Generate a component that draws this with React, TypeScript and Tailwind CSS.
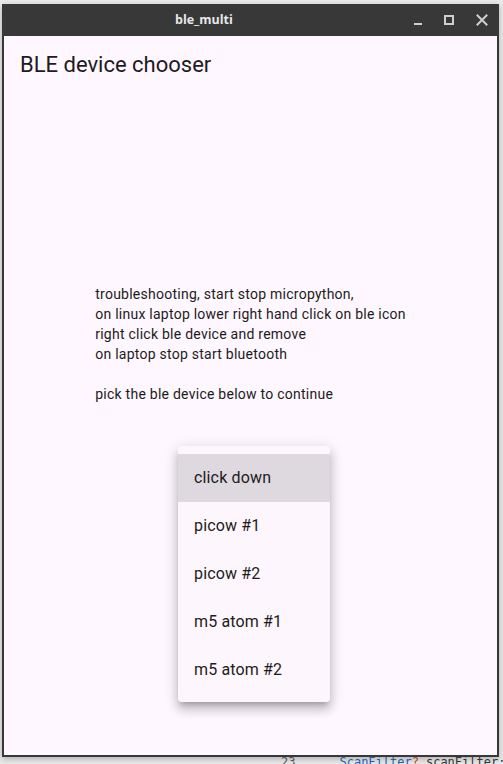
const notes = [
  "troubleshooting, start stop micropython,",
  "on linux laptop lower right hand click on ble icon",
  "right click ble device and remove",
  "on laptop stop start bluetooth",
]

const devices = ["click down", "picow #1", "picow #2", "m5 atom #1", "m5 atom #2"]

function TitleBar() {
  return (
    <div className="h-[32px] bg-[#383838] flex items-center text-[#d6d6d6]">
      <span
        className="ml-[173px] text-[12.5px] font-bold text-[#e8e8e8]"
        style={{ fontFamily: '"Open Sans", "DejaVu Sans", sans-serif' }}
      >
        ble_multi
      </span>
      <div className="ml-auto flex items-center mr-[11px]">
        <svg width="10" height="10" viewBox="0 0 10 10" className="mr-[21px] mt-[2px]">
          <rect x="1" y="7" width="8" height="2" fill="#cfcfcf" />
        </svg>
        <svg width="10" height="10" viewBox="0 0 10 10" className="mr-[22px]">
          <rect x="1" y="1" width="8" height="8" fill="none" stroke="#cfcfcf" strokeWidth="2" />
        </svg>
        <svg width="12" height="12" viewBox="0 0 12 12">
          <path d="M1.5 1.5 L10.5 10.5 M10.5 1.5 L1.5 10.5" stroke="#cfcfcf" strokeWidth="2" strokeLinecap="square" />
        </svg>
      </div>
    </div>
  )
}

function DeviceMenu() {
  return (
    <div className="ml-[174px] mt-[42px] w-[152px] py-2 bg-[#fdf7fd] rounded-[4px] shadow-[0_5px_5px_-3px_rgba(0,0,0,0.2),0_8px_10px_1px_rgba(0,0,0,0.14),0_3px_14px_2px_rgba(0,0,0,0.12)]">
      {devices.map((d, i) => (
        <div
          key={d}
          className={`h-12 flex items-center px-4 text-[16px] tracking-[0.15px] text-[#1d1b20] ${i === 0 ? "bg-[#ddd9de]" : ""}`}
        >
          {d}
        </div>
      ))}
    </div>
  )
}

export default function App() {
  return (
    <div
      className="w-[503px] h-[764px] bg-[#e9e9e9] overflow-hidden flex flex-col"
      style={{ fontFamily: 'Roboto, "Noto Sans", sans-serif' }}
    >
      <div className="h-[4px] shrink-0" />
      <div className="ml-[2px] w-[497px] h-[753px] shrink-0 flex flex-col bg-[#383838] border-x-2 border-b-2 border-[#383838] shadow-[0_2px_6px_rgba(0,0,0,0.25)]">
        <div className="-mx-[2px]">
          <TitleBar />
        </div>
        <div className="flex-1 bg-[#fef7ff] flex flex-col">
          <div className="h-14 flex items-center px-4 text-[22px] text-[#1d1b20]">BLE device chooser</div>
          <div className="mt-[192px] mx-auto w-fit text-[14px] leading-[20px] tracking-[0.25px] text-[#1d1b20]">
            {notes.map((n) => (
              <div key={n}>{n}</div>
            ))}
            <div className="h-5" />
            <div>pick the ble device below to continue</div>
          </div>
          <DeviceMenu />
        </div>
      </div>
      <div className="h-[7px] overflow-hidden flex items-start text-[12px] leading-[12px]" style={{ fontFamily: '"DejaVu Sans Mono", monospace' }}>
        <div className="ml-[220px] w-px h-full bg-[#d0d0d0]" />
        <div className="ml-[16px] w-px h-full bg-[#d0d0d0]" />
        <span className="ml-[45px] -mt-[1px] text-[#555]">23</span>
        <span className="ml-[44px] -mt-[1px] text-[#2a5caa]">ScanFilter</span>
        <span className="-mt-[1px] text-[#c0392b]">?</span>
        <span className="ml-[7px] -mt-[1px] text-[#333]">scanFilter;</span>
      </div>
    </div>
  )
}
